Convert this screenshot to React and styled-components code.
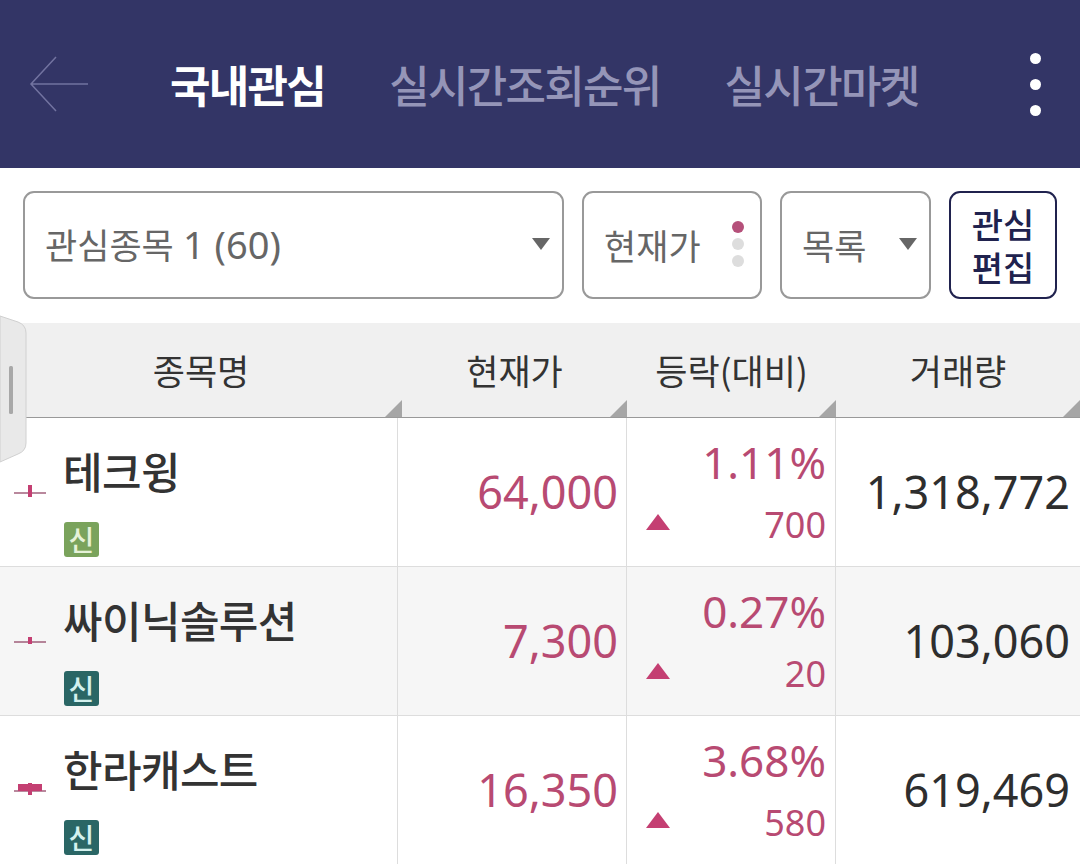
import React from 'react';
import styled, { createGlobalStyle } from 'styled-components';

const Global = createGlobalStyle`
  html, body { margin: 0; padding: 0; background: #fff; }
  body { width: 1080px; height: 864px; overflow: hidden; font-family: "Noto Sans CJK KR", "Noto Sans", sans-serif; }
`;
const Page = styled.div`position: relative; width: 1080px; height: 864px; overflow: hidden;`;
const Header = styled.header`
  height: 168px; background: #333566; display: flex; align-items: center; position: relative;
`;
const Back = styled.svg`width: 60px; height: 56px; margin-left: 29px; flex: none;`;
const Tabs = styled.nav`display: flex; margin-left: 81px; gap: 64px; align-items: center;`;
const Tab = styled.span`
  font-size: 44px; line-height: 60px; letter-spacing: -1.7px; white-space: nowrap;
  font-weight: ${p => (p.$active ? 700 : 500)};
  color: ${p => (p.$active ? '#ffffff' : '#9595b8')};
`;
const Kebab = styled.div`
  margin-left: auto; margin-right: 39px; display: flex; flex-direction: column; gap: 15px;
`;
const KebabDot = styled.i`display: block; width: 11px; height: 11px; border-radius: 50%; background: #fff;`;

const Toolbar = styled.div`
  height: 155px; box-sizing: border-box; padding: 23px 23px 0 23px; display: flex; gap: 18px; align-items: flex-start;
`;
const Control = styled.div`
  box-sizing: border-box; height: 108px; width: ${p => p.$w}px; flex: none; border: 2px solid #999; border-radius: 11px;
  display: flex; align-items: center; color: #666; font-family: "Noto Sans", "Noto Sans CJK KR", sans-serif; font-size: 35px;
  padding-left: 20px; padding-right: ${p => p.$pr || 0}px; padding-bottom: 2px;
  justify-content: space-between; white-space: nowrap;
`;
const Count = styled.span`font-size: 38px;`;
const Caret = styled.span`
  width: 0; height: 0; border-left: 9px solid transparent; border-right: 9px solid transparent; border-top: 12px solid #666; flex: none;
`;
const Dots = styled.div`display: flex; flex-direction: column; gap: 5px;`;
const Dot = styled.i`display: block; width: 12px; height: 12px; border-radius: 50%; background: ${p => p.$c};`;
const EditButton = styled.div`
  box-sizing: border-box; width: 108px; height: 108px; flex: none; border: 2px solid #20224e; border-radius: 11px; color: #20224e;
  font-size: 34px; line-height: 43px; font-weight: 500; text-align: center; display: flex; align-items: center; justify-content: center;
`;

const HeadRow = styled.div`
  display: grid; grid-template-columns: 402px 225px 209px 244px;
  height: 95px; box-sizing: border-box; background: #f0f0f0; border-bottom: 1px solid #999;
`;
const HeadCell = styled.div`
  position: relative; display: flex; align-items: center; justify-content: center; padding-bottom: 2px;
  font-size: 35px; color: #333; box-sizing: border-box;
  &::after {
    content: ""; position: absolute; right: 0; bottom: 0; width: 0; height: 0;
    border-left: 17px solid transparent; border-bottom: 17px solid #a6a6a6;
  }
`;
const Row = styled.div`
  display: grid; grid-template-columns: 398px 229px 209px 244px;
  height: 149px; box-sizing: border-box; border-bottom: 1px solid #ddd; background: ${p => (p.$alt ? '#f6f6f6' : '#fff')};
`;
const Cell = styled.div`box-sizing: border-box; border-right: 1px solid #ddd; &:last-child { border-right: none; }`;
const NameCell = styled(Cell)`display: grid; grid-template-columns: 64px 1fr; padding-top: 27px;`;
const Candle = styled.svg`width: 32px; height: 14px; margin: 38px 0 0 14px;`;
const NameStack = styled.div`display: flex; flex-direction: column;`;
const Name = styled.div`font-size: 43px; line-height: 50px; font-weight: 500; color: #333; letter-spacing: -0.6px; white-space: nowrap; margin-left: -1px;`;
const Badge = styled.span`
  margin-top: 27px; width: 35px; height: 35px; border-radius: 3px; background: ${p => p.$c}; color: ${p => p.$t};
  font-size: 28px; line-height: 34px; font-weight: 500; text-align: center; display: block;
`;
const Num = styled.div`
  font-family: "Noto Sans", sans-serif; color: ${p => p.$c}; font-size: ${p => p.$s}px; white-space: nowrap; text-align: right;
`;
const PriceCell = styled(Cell)`display: flex; align-items: center; justify-content: flex-end; padding: 0 8px 2px 0;`;
const VolCell = styled(Cell)`display: flex; align-items: center; justify-content: flex-end; padding: 0 10px 2px 0;`;
const ChangeCell = styled(Cell)`display: grid; grid-template-rows: 88px 1fr; padding: 0 9px 0 19px; align-items: center;`;
const ChangeBottom = styled.div`display: flex; justify-content: space-between; align-items: center; height: 34px; margin-top: -23px;`;
const Up = styled.span`
  width: 0; height: 0; margin-top: -6px; border-left: 12px solid transparent; border-right: 12px solid transparent; border-bottom: 16px solid #c43f72;
`;
const SideTab = styled.svg`position: absolute; left: 0; top: 315px; width: 28px; height: 150px;`;

const PINK = '#b84a72';
const rows = [
  { name: '테크윙', price: '64,000', pct: '1.11%', diff: '700', vol: '1,318,772', badge: ['#7aa35c', '#e6f2d8'], wick: [2, 12], body: null },
  { name: '싸이닉솔루션', price: '7,300', pct: '0.27%', diff: '20', vol: '103,060', badge: ['#2a6665', '#d4f1ee'], wick: [5, 7], body: null },
  { name: '한라캐스트', price: '16,350', pct: '3.68%', diff: '580', vol: '619,469', badge: ['#2a6665', '#d4f1ee'], wick: [2, 12], body: [3, 7] },
];

export default function App() {
  return (
    <Page>
      <Global />
      <Header>
        <Back viewBox="0 0 60 56" fill="none" stroke="#7273a0" strokeWidth="1.5">
          <path d="M2 28H59M27 1L2 28L27 55" />
        </Back>
        <Tabs>
          <Tab $active>국내관심</Tab>
          <Tab>실시간조회순위</Tab>
          <Tab>실시간마켓</Tab>
        </Tabs>
        <Kebab><KebabDot /><KebabDot /><KebabDot /></Kebab>
      </Header>
      <Toolbar>
        <Control $w={541} $pr={12}><span>관심종목 <Count>1 (60)</Count></span><Caret /></Control>
        <Control $w={180} $pr={16}>현재가
          <Dots><Dot $c="#b5507a" /><Dot $c="#dddddd" /><Dot $c="#dddddd" /></Dots>
        </Control>
        <Control $w={151} $pr={12}>목록<Caret /></Control>
        <EditButton>관심<br />편집</EditButton>
      </Toolbar>
      <HeadRow>
        <HeadCell>종목명</HeadCell>
        <HeadCell>현재가</HeadCell>
        <HeadCell>등락(대비)</HeadCell>
        <HeadCell>거래량</HeadCell>
      </HeadRow>
      {rows.map((r, i) => (
        <Row key={r.name} $alt={i === 1}>
          <NameCell>
            <Candle viewBox="0 0 32 14">
              <path d="M0 10H32" stroke="#8a3a5c" strokeWidth="1.2" />
              <rect x="14" y={r.wick[0]} width="4" height={r.wick[1]} fill="#c43f72" />
              {r.body && <rect x="4" y={r.body[0]} width="24" height={r.body[1]} fill="#c43f72" />}
            </Candle>
            <NameStack>
              <Name>{r.name}</Name>
              <Badge $c={r.badge[0]} $t={r.badge[1]}>신</Badge>
            </NameStack>
          </NameCell>
          <PriceCell><Num $c={PINK} $s={45}>{r.price}</Num></PriceCell>
          <ChangeCell>
            <Num $c={PINK} $s={44}>{r.pct}</Num>
            <ChangeBottom>
              <Up />
              <Num $c={PINK} $s={36}>{r.diff}</Num>
            </ChangeBottom>
          </ChangeCell>
          <VolCell><Num $c="#2e2e2e" $s={45}>{r.vol}</Num></VolCell>
        </Row>
      ))}
      <SideTab viewBox="0 0 28 150">
        <path d="M0 1L18 7Q26 10 26 18V128Q26 136 18 139L0 147Z" fill="#e9e9e9" stroke="#d0d0d0" strokeWidth="1" />
        <rect x="9" y="51" width="4" height="48" rx="1.5" fill="#a8a8a8" />
      </SideTab>
    </Page>
  );
}
